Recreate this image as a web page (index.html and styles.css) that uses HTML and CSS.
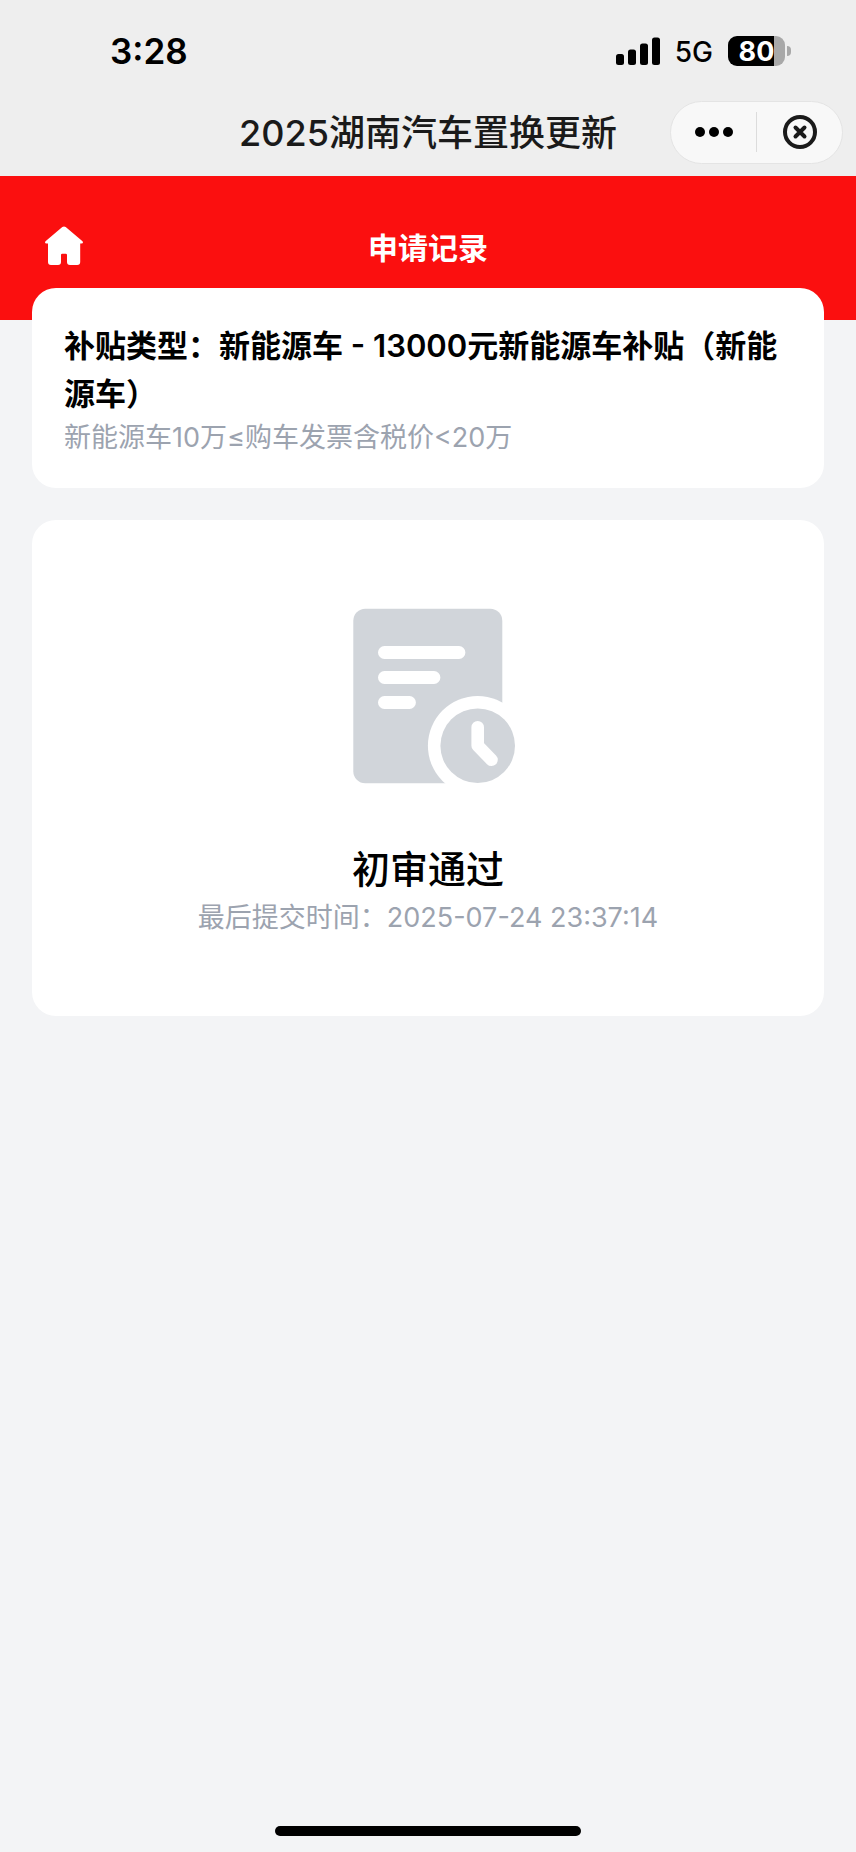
FILE: index.html
```html
<!DOCTYPE html>
<html lang="zh-CN">
<head>
<meta charset="UTF-8">
<meta name="viewport" content="width=device-width, initial-scale=1.0">
<title>2025湖南汽车置换更新</title>
<link rel="stylesheet" href="styles.css">
</head>
<body>
    <!-- Status bar -->
    <div class="status-bar">
        <span class="time">3:28</span>
        <div class="status-icons">
            <svg class="signal" viewBox="0 0 44 28" aria-hidden="true">
                <rect x="0" y="17" width="8" height="11" rx="2.5"/>
                <rect x="12" y="12.5" width="8" height="15.5" rx="2.5"/>
                <rect x="24" y="6.5" width="8" height="21.5" rx="2.5"/>
                <rect x="36" y="0.5" width="8" height="27.5" rx="2.5"/>
            </svg>
            <span class="network">5G</span>
            <div class="battery">
                <span class="battery-level">80</span>
                <span class="battery-cap"></span>
            </div>
        </div>
    </div>

    <!-- Mini program navigation -->
    <div class="nav">
        <div class="nav-title">2025湖南汽车置换更新</div>
        <div class="capsule">
            <button class="capsule-button" type="button" aria-label="更多">
                <svg width="40" height="40" viewBox="0 0 40 40">
                    <circle cx="6" cy="20" r="5"/>
                    <circle cx="20" cy="20" r="5"/>
                    <circle cx="34" cy="20" r="5"/>
                </svg>
            </button>
            <span class="divider"></span>
            <button class="capsule-button" type="button" aria-label="关闭">
                <svg width="40" height="40" viewBox="0 0 40 40" fill="none" stroke="#1a1a1a" stroke-width="4" stroke-linecap="round">
                    <circle cx="20" cy="20" r="15"/>
                    <path d="M15.500 15.500l9 9M24.500 15.500l-9 9"/>
                </svg>
            </button>
        </div>
    </div>

    <header class="header">
        <a class="home" href="#" aria-label="首页">
            <svg width="40" height="40" viewBox="0 0 40 40" fill="#fff">
                <path d="M18.300 1.100Q20 -.3 21.700 1.100L38.500 15.300Q39.800 17.500 37.500 17.500H36.200V36Q36.200 39 33.200 39H26Q23 39 23 36V29Q23 27.800 21.800 27.800H18.200Q17 27.800 17 29V36Q17 39 14 39H7Q4 39 4 36V17.500H2.500Q.2 17.500 1.500 15.300Z"/>
            </svg>
        </a>
        <h1>申请记录</h1>
    </header>

    <main class="content">
        <section class="card">
            <h2>补贴类型：新能源车 - 13000元新能源车补贴（新能源车）</h2>
            <p>新能源车10万≤购车发票含税价&lt;20万</p>
        </section>

        <section class="card result">
            <!-- Document with clock -->
            <svg class="result-icon" width="192" height="192" viewBox="0 0 192 192" aria-hidden="true">
                <rect x="21.300" y="8.700" width="149" height="174.500" rx="12" fill="#d1d5da"/>
                <g stroke="#fff" stroke-width="12.800" stroke-linecap="round">
                    <path d="M52.400 52.500H127M52.400 77.500H102M52.400 102.500H77.500"/>
                </g>
                <circle cx="145.700" cy="145.700" r="49.800" fill="#fff"/>
                <circle cx="145.700" cy="145.700" r="37.300" fill="#d1d5da"/>
                <path d="M145.700 127.300V145.700L159.500 159.800" fill="none" stroke="#fff" stroke-width="12.600" stroke-linecap="round" stroke-linejoin="round"/>
            </svg>
            <h3>初审通过</h3>
            <p>最后提交时间：2025-07-24 23:37:14</p>
        </section>
    </main>

    <div class="home-indicator"></div>
</body>
</html>
```
FILE: styles.css
```css
* {
    box-sizing: border-box;
}

body {
    margin: 0;
    min-height: 100vh;
    display: flex;
    flex-direction: column;
    background: #f3f4f6;
    color: #000;
    font-family: Inter, "Noto Sans CJK SC", sans-serif;
}

h1, h2, h3, p {
    margin: 0;
}

/* Status bar */
.status-bar {
    height: 88px;
    padding: 14px 65px 0 110px;
    display: flex;
    align-items: center;
    justify-content: space-between;
    background: #eee;
}

.time {
    font-size: 35px;
    font-weight: 600;
}

.status-icons {
    display: flex;
    align-items: center;
    gap: 15px;
}

.signal {
    width: 44px;
    height: 28px;
}

.network {
    padding-top: 2px;
    font-size: 28px;
    font-weight: 500;
}

.battery {
    display: flex;
    align-items: center;
    gap: 2px;
}

.battery-level {
    width: 57px;
    height: 30px;
    border-radius: 9px;
    background: linear-gradient(to right, #000 80%, #a8a8a8 80%);
    color: #fff;
    font-size: 27px;
    font-weight: 700;
    line-height: 32px;
    text-align: center;
}

.battery-cap {
    width: 4px;
    height: 10px;
    border-radius: 0 5px 5px 0;
    background: #a8a8a8;
}

/* Navigation */
.nav {
    height: 88px;
    padding: 0 13px;
    display: grid;
    grid-template-columns: 1fr auto 1fr;
    align-items: center;
    background: #eee;
}

.nav-title {
    grid-column: 2;
    padding-bottom: 4px;
    color: #1a1a1a;
    font-size: 36px;
    font-weight: 500;
}

.capsule {
    justify-self: end;
    width: 173px;
    height: 63px;
    display: flex;
    align-items: center;
    border: 1px solid #e4e4e4;
    border-radius: 32px;
    background: #f8f8f8;
}

.capsule-button {
    flex: 1;
    padding: 0;
    display: flex;
    justify-content: center;
    border: none;
    background: none;
    cursor: pointer;
}

.divider {
    width: 1px;
    height: 40px;
    background: #dcdcdc;
}

/* Page header */
.header {
    height: 144px;
    padding: 0 44px 4px;
    display: grid;
    grid-template-columns: 1fr auto 1fr;
    align-items: center;
    background: #fb0f0f;
}

.home {
    display: flex;
}

.header h1 {
    padding-top: 4px;
    color: #fff;
    font-size: 30px;
    font-weight: 700;
    line-height: 40px;
}

/* Cards */
.content {
    margin-top: -32px;
    padding: 0 32px;
    display: flex;
    flex-direction: column;
    gap: 32px;
}

.card {
    padding: 34px 32px 30px;
    border-radius: 24px;
    background: #fff;
}

.card h2 {
    font-size: 31px;
    font-weight: 600;
    line-height: 48px;
}

.card p {
    color: #9ca3af;
    font-size: 27px;
    line-height: 40px;
}

.result {
    padding: 80px 32px 78px;
    display: flex;
    flex-direction: column;
    align-items: center;
    text-align: center;
}

.result-icon {
    margin-bottom: 48px;
}

.result h3 {
    font-size: 38px;
    font-weight: 500;
    line-height: 58px;
}

.home-indicator {
    width: 306px;
    height: 10px;
    margin: auto auto 16px;
    border-radius: 5px;
    background: #000;
}
```
